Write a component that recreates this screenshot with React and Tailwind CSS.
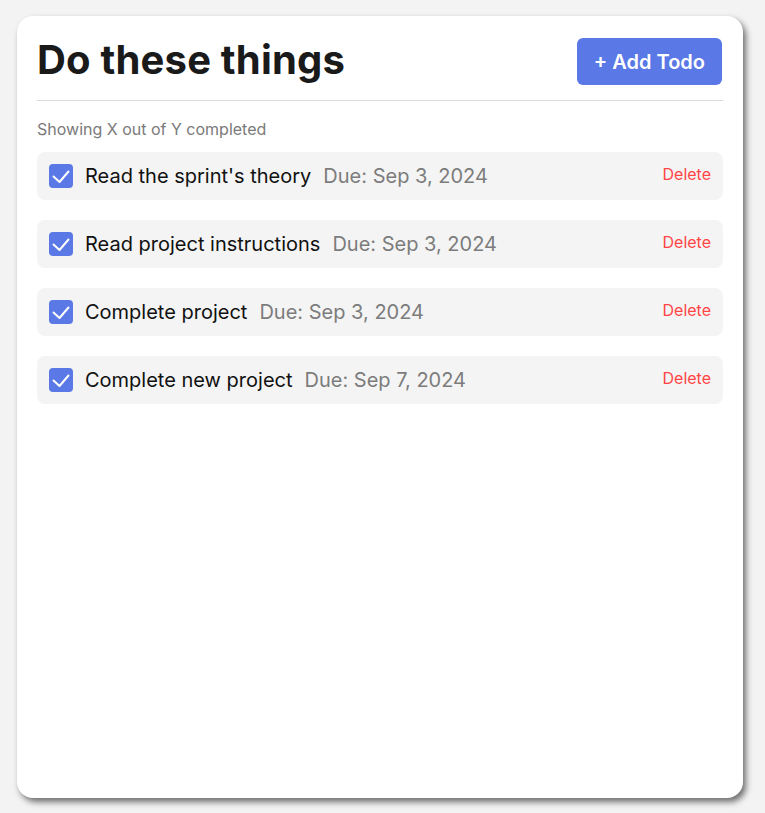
const todos = [
  { id: 1, title: "Read the sprint's theory", due: "Sep 3, 2024" },
  { id: 2, title: "Read project instructions", due: "Sep 3, 2024" },
  { id: 3, title: "Complete project", due: "Sep 3, 2024" },
  { id: 4, title: "Complete new project", due: "Sep 7, 2024" },
];

const CheckBox = () => (
  <span className="w-6 h-6 shrink-0 rounded-[4px] bg-[#5a78e6] flex items-center justify-center">
    <svg width="24" height="24" viewBox="0 0 24 24" fill="none">
      <path d="M4.5 12.5l6 5.5 9-10.5" stroke="white" strokeWidth="2" strokeLinecap="round" strokeLinejoin="round" />
    </svg>
  </span>
);

const TodoItem = ({ todo }) => (
  <li className="h-12 rounded-lg bg-[#f4f4f4] pl-3 pr-3 flex items-center">
    <CheckBox />
    <span className="ml-3 text-[20px] text-[#111]">{todo.title}</span>
    <span className="ml-3 text-[20px] text-[#7c7c7c]">Due: {todo.due}</span>
    <button className="ml-auto mb-1 text-base text-[#ff4545]">Delete</button>
  </li>
);

export default function App() {
  return (
    <div className="min-h-[813px] bg-[#f3f3f3] pt-4 pl-[17px] font-['Inter',sans-serif]">
      <div className="w-[726px] h-[782px] bg-white rounded-2xl shadow-[3px_4px_6px_rgba(0,0,0,0.55)] px-5">
        <header className="pt-[18px] pb-[15px] border-b border-[#dcdcdc] flex items-start justify-between">
          <h1 className="mt-[2px] text-[40px] leading-[48px] font-bold tracking-[0.2px] text-[#1a1a1a]">Do these things</h1>
          <button className="mt-1 mr-px h-[47px] px-[17px] rounded-md bg-[#5a78e6] text-white text-[20px] font-semibold">
            + Add Todo
          </button>
        </header>

        <p className="mt-4 text-base leading-6 text-[#7a7a7a]">Showing X out of Y completed</p>

        <ul className="mt-[11px] flex flex-col gap-5">
          {todos.map((todo) => (
            <TodoItem key={todo.id} todo={todo} />
          ))}
        </ul>
      </div>
    </div>
  );
}
